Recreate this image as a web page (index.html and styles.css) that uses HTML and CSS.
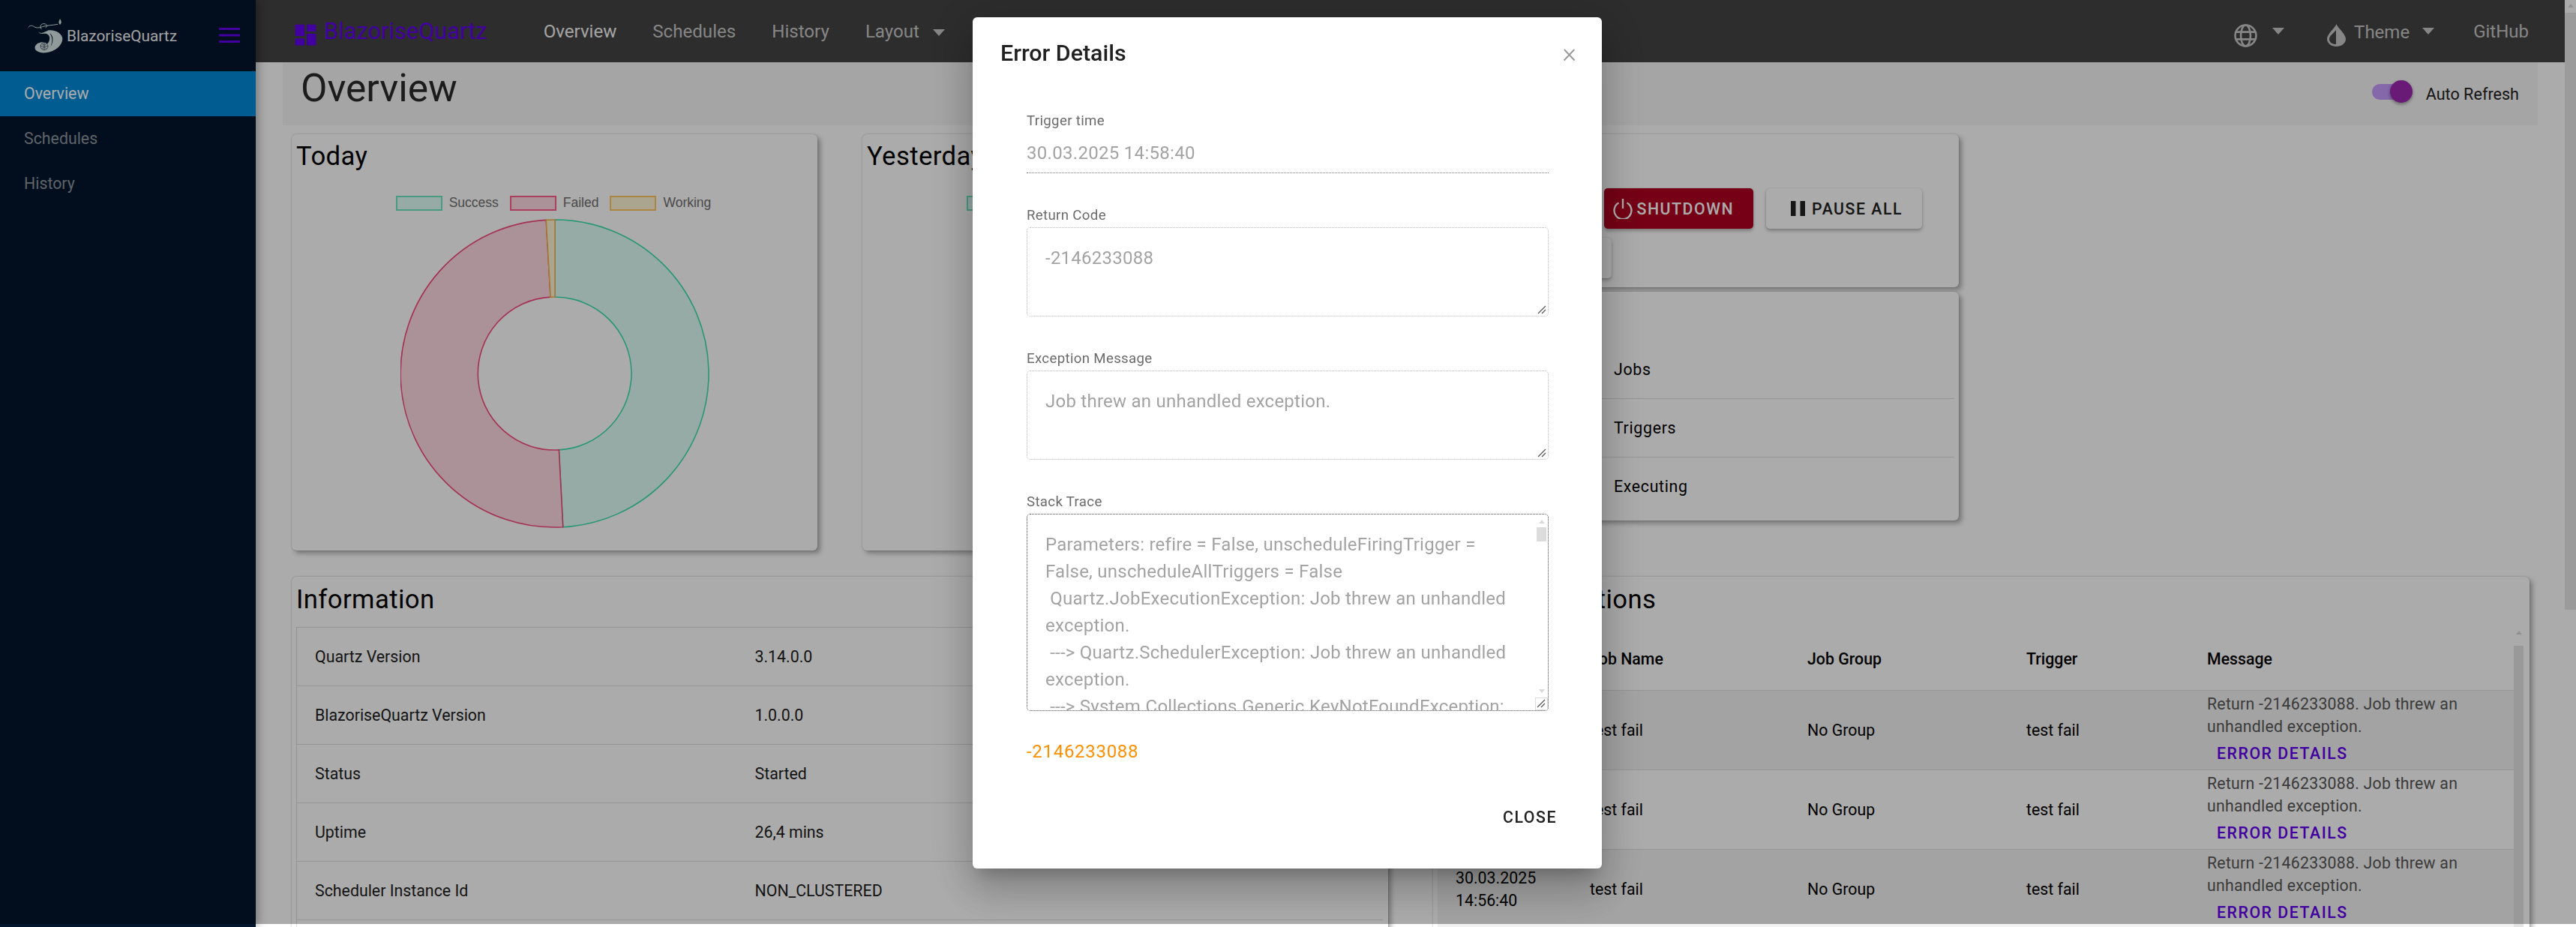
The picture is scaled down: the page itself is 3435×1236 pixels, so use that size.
FILE: index.html
```html
<!DOCTYPE html>
<html lang="en">
<head>
    <meta charset="UTF-8">
    <meta name="viewport" content="width=device-width, initial-scale=1.0">
    <title>BlazoriseQuartz</title>
    <link rel="stylesheet" href="styles.css">
</head>
<body>
    <div class="app">
        <aside class="sidebar">
            <div class="side-brand">
                <svg class="side-logo" viewBox="21 18 141 138">
                    <path class="logo-line" d="M24 52C28 44 40 44 46 50C56 56 70 54 80 50C96 44 120 44 142 40"/>
                    <path class="logo-line" d="M76 60C66 50 74 36 88 38C100 40 100 50 92 54"/>
                    <path class="logo-fill" d="M150 18C156 28 158 34 150 42C142 34 146 28 150 18Z"/>
                    <path class="logo-fill" d="M62 70C76 82 90 70 104 64C130 60 162 78 160 100C158 124 134 150 92 154C66 156 46 146 50 130C56 112 84 106 100 118C112 104 112 84 96 78C84 76 70 82 62 70Z"/>
                    <path class="logo-cut" d="M108 76C124 84 126 110 112 130C122 108 120 90 108 76Z"/>
                    <circle class="logo-globe" cx="87" cy="128" r="15"/>
                    <path class="logo-globe" d="M72 128H102M87 113V143M77 118C83 124 91 124 97 118M77 138C83 132 91 132 97 138"/>
                </svg>
                <span class="side-title">BlazoriseQuartz</span>
                <svg class="side-toggle" viewBox="0 0 28 20"><rect width="28" height="3"/><rect y="8.5" width="28" height="3"/><rect y="17" width="28" height="3"/></svg>
            </div>
            <a class="side-item active">Overview</a>
            <a class="side-item">Schedules</a>
            <a class="side-item">History</a>
        </aside>

        <div class="main">
            <nav class="topbar">
                <svg class="brand-icon" viewBox="0 0 24 24"><path d="M3 13h8V3H3v10zm0 8h8v-6H3v6zm10 0h8V11h-8v10zm0-18v6h8V3h-8z"/></svg>
                <span class="brand-text">BlazoriseQuartz</span>
                <a class="nav-link current">Overview</a>
                <a class="nav-link">Schedules</a>
                <a class="nav-link">History</a>
                <a class="nav-link">Layout<i class="caret"></i></a>
                <div class="nav-right">
                    <svg class="globe" viewBox="0 0 24 24">
                        <circle cx="12" cy="12" r="10.8"/>
                        <ellipse cx="12" cy="12" rx="5" ry="10.8"/>
                        <path d="M2 8.2H22M2 15.8H22"/>
                    </svg>
                    <i class="caret globe-caret"></i>
                    <svg class="drop" viewBox="0 0 25 30">
                        <path d="M12.5 0C14 5 25 13 25 20C25 26 19 30 12.5 30C6 30 0 26 0 20C0 13 11 5 12.5 0Z"/>
                        <path class="drop-cut" d="M12 8C8 13 3 16 3 20C3 24.5 7 27 12 27Z"/>
                    </svg>
                    <span class="theme-text">Theme</span>
                    <i class="caret theme-caret"></i>
                    <a class="nav-link github">GitHub</a>
                </div>
            </nav>

            <div class="page-head">
                <h2 class="page-title">Overview</h2>
                <div class="refresh">
                    <span class="switch"><span class="switch-thumb"></span></span>
                    <span>Auto Refresh</span>
                </div>
            </div>

            <div class="cards">
                <section class="card chart-card">
                    <h3 class="card-title">Today</h3>
                    <div class="legend">
                        <span class="legend-box success"></span><span class="legend-label">Success</span>
                        <span class="legend-box failed"></span><span class="legend-label">Failed</span>
                        <span class="legend-box working"></span><span class="legend-label">Working</span>
                    </div>
                    <svg class="donut" viewBox="0 0 412 412">
                        <path class="success" d="M206 1A205 205 0 0 1 216.73 410.72L211.34 307.86A102 102 0 0 0 206 104Z"/>
                        <path class="failed" d="M216.73 410.72A205 205 0 1 1 194.2 1.34L200.13 104.17A102 102 0 1 0 211.34 307.86Z"/>
                        <path class="working" d="M194.2 1.34A205 205 0 0 1 206 1L206 104A102 102 0 0 0 200.13 104.17Z"/>
                    </svg>
                </section>

                <section class="card chart-card">
                    <h3 class="card-title">Yesterday</h3>
                    <div class="legend">
                        <span class="legend-box success"></span><span class="legend-label">Success</span>
                        <span class="legend-box failed"></span><span class="legend-label">Failed</span>
                        <span class="legend-box working"></span><span class="legend-label">Working</span>
                    </div>
                </section>

                <div class="side-stack">
                    <section class="card actions-card">
                        <div class="action-row">
                            <button class="btn">Standby</button>
                            <button class="btn danger">
                                <svg class="power" viewBox="0 0 28 28"><path d="M8.5 6.5A11.5 11.5 0 1 0 19.5 6.5M14 1V14"/></svg>
                                Shutdown
                            </button>
                            <button class="btn pause">
                                <svg class="pause-icon" viewBox="0 0 19 20"><rect width="6.5" height="20"/><rect x="12.5" width="6.5" height="20"/></svg>
                                Pause All
                            </button>
                        </div>
                        <div class="action-row second">
                            <button class="btn wide">Resume All</button>
                        </div>
                    </section>
                    <section class="card counts-card">
                        <div class="count-row">Jobs</div>
                        <div class="count-row">Triggers</div>
                        <div class="count-row">Executing</div>
                    </section>
                </div>

                <section class="card wide-card">
                    <h3 class="card-title">Information</h3>
                    <table class="info-table">
                        <tr><td class="info-key">Quartz Version</td><td>3.14.0.0</td></tr>
                        <tr><td class="info-key">BlazoriseQuartz Version</td><td>1.0.0.0</td></tr>
                        <tr><td class="info-key">Status</td><td>Started</td></tr>
                        <tr><td class="info-key">Uptime</td><td>26,4 mins</td></tr>
                        <tr><td class="info-key">Scheduler Instance Id</td><td>NON_CLUSTERED</td></tr>
                        <tr><td class="info-key"></td><td></td></tr>
                    </table>
                </section>

                <section class="card wide-card">
                    <h3 class="card-title">Recent Exceptions</h3>
                    <div class="table-wrap">
                        <table class="exc-table">
                            <colgroup>
                                <col class="col-date"><col class="col-job"><col class="col-group"><col class="col-trigger"><col class="col-msg">
                            </colgroup>
                            <thead>
                                <tr><th>Time</th><th>Job Name</th><th>Job Group</th><th>Trigger</th><th>Message</th></tr>
                            </thead>
                            <tbody>
                                <tr>
                                    <td>30.03.2025 14:58:40</td><td>test fail</td><td>No Group</td><td>test fail</td>
                                    <td class="msg">Return -2146233088. Job threw an unhandled exception.<a class="err-link">Error Details</a></td>
                                </tr>
                                <tr>
                                    <td>30.03.2025 14:57:40</td><td>test fail</td><td>No Group</td><td>test fail</td>
                                    <td class="msg">Return -2146233088. Job threw an unhandled exception.<a class="err-link">Error Details</a></td>
                                </tr>
                                <tr>
                                    <td>30.03.2025 14:56:40</td><td>test fail</td><td>No Group</td><td>test fail</td>
                                    <td class="msg">Return -2146233088. Job threw an unhandled exception.<a class="err-link">Error Details</a></td>
                                </tr>
                            </tbody>
                        </table>
                        <div class="fake-scroll">
                            <i class="arrow-up"></i>
                            <div class="fake-thumb"></div>
                        </div>
                    </div>
                </section>
            </div>
        </div>

        <div class="page-scroll">
            <i class="arrow-up"></i>
            <div class="page-thumb"></div>
        </div>
    </div>

    <div class="backdrop"></div>

    <div class="modal">
        <div class="modal-head">
            <h5 class="modal-title">Error Details</h5>
            <span class="modal-x">&times;</span>
        </div>
        <div class="modal-body">
            <label class="field-label">Trigger time</label>
            <div class="field-input">30.03.2025 14:58:40</div>

            <label class="field-label spaced">Return Code</label>
            <div class="field-area">-2146233088<svg class="grip" viewBox="0 0 12 12"><path d="M11 1L1 11M11 6L6 11"/></svg></div>

            <label class="field-label spaced">Exception Message</label>
            <div class="field-area">Job threw an unhandled exception.<svg class="grip" viewBox="0 0 12 12"><path d="M11 1L1 11M11 6L6 11"/></svg></div>

            <label class="field-label spaced">Stack Trace</label>
            <div class="field-area stack">
                <div class="stack-text">Parameters: refire = False, unscheduleFiringTrigger = False, unscheduleAllTriggers = False
 Quartz.JobExecutionException: Job threw an unhandled exception.
 ---&gt; Quartz.SchedulerException: Job threw an unhandled exception.
 ---&gt; System.Collections.Generic.KeyNotFoundException: The given key was not present in the dictionary.</div>
                <i class="arrow-up area-up"></i>
                <div class="area-thumb"></div>
                <i class="arrow-down area-down"></i>
                <div class="area-corner"><svg class="grip" viewBox="0 0 12 12"><path d="M11 1L1 11M11 6L6 11"/></svg></div>
            </div>

            <div class="return-code">-2146233088</div>
        </div>
        <div class="modal-foot">
            <button class="close-btn">Close</button>
        </div>
    </div>
</body>
</html>
```

FILE: styles.css
```css
* {
    box-sizing: border-box;
}

html, body {
    margin: 0;
    height: 1236px;
    overflow: hidden;
}

body {
    font-family: Roboto, "Liberation Sans", sans-serif;
    font-size: 21.33px;
    color: #000;
    background: #fff;
}

h2, h3, h5 {
    margin: 0;
    font-weight: 400;
}

.app {
    display: flex;
    height: 1236px;
}

/* sidebar */
.sidebar {
    position: relative;
    z-index: 1;
    flex: 0 0 341px;
    background: #03162d;
    box-shadow: 0 0 14px rgba(0, 0, 0, 0.45);
}
.side-brand {
    display: flex;
    align-items: center;
    height: 95px;
    padding-left: 37px;
}
.side-logo {
    width: 47px;
    height: 46px;
    margin-right: 5px;
}
.logo-line {
    fill: none;
    stroke: #d8e6e6;
    stroke-width: 3;
}
.logo-fill {
    fill: #d8e6e6;
}
.logo-cut {
    fill: #03162d;
}
.logo-globe {
    fill: none;
    stroke: #25384a;
    stroke-width: 2;
}
.side-title {
    color: #fff;
    opacity: 0.95;
    font-size: 20.8px;
}
.side-toggle {
    width: 28px;
    height: 20px;
    margin-left: 56px;
    margin-top: -1px;
    fill: #6200ee;
}
.side-item {
    display: block;
    height: 60px;
    line-height: 60px;
    padding-left: 32px;
    color: #8c959d;
}
.side-item.active {
    background: #0289d9;
    color: #fff;
}

/* top bar */
.main {
    flex: 1;
    min-width: 0;
    overflow: hidden;
}
.topbar {
    display: flex;
    align-items: center;
    height: 83px;
    padding: 0 48px;
    background: #434343;
    font-size: 24.1px;
}
.brand-icon {
    width: 37px;
    height: 37px;
    margin-top: 9px;
    fill: #6200ee;
    flex: none;
}
.brand-text {
    margin-left: 6px;
    margin-right: 75px;
    font-size: 30.8px;
    color: #6200ee;
}
.nav-link {
    margin-right: 48px;
    color: #c8c8c8;
}
.nav-link.current {
    color: #f5f5f5;
}
.caret {
    display: inline-block;
    width: 0;
    height: 0;
    margin-left: 18px;
    vertical-align: middle;
    border-left: 8px solid transparent;
    border-right: 8px solid transparent;
    border-top: 9px solid #c8c8c8;
}
.nav-right {
    display: flex;
    align-items: center;
    margin-left: auto;
    font-size: 24px;
}
.nav-link.github {
    margin: 0 0 0 52px;
}
.globe {
    width: 31px;
    height: 31px;
    margin-top: 11px;
    fill: none;
    stroke: #c8c8c8;
    stroke-width: 2;
}
.globe-caret {
    margin-left: 20px;
    flex: none;
}
.drop {
    width: 25px;
    height: 30px;
    margin: 11px 11px 0 57px;
    fill: #c8c8c8;
}
.drop-cut {
    fill: #434343;
}
.theme-text {
    margin-top: 3px;
    color: #c8c8c8;
}
.theme-caret {
    margin-left: 17px;
    flex: none;
}

/* page heading */
.page-head {
    display: flex;
    justify-content: space-between;
    height: 84px;
    margin: 0 36px;
    padding: 4px 25px 0 24px;
    background: #f6f6f6;
}
.page-title {
    font-size: 51.5px;
    line-height: 61px;
    color: #2a2a2a;
}
.refresh {
    display: flex;
    align-items: center;
    margin-top: -4px;
    color: #222;
    font-size: 21.6px;
}
.switch {
    position: relative;
    width: 54px;
    height: 21px;
    margin-right: 18px;
    margin-bottom: 5px;
    border-radius: 11px;
    background: #c59bfc;
}
.switch-thumb {
    position: absolute;
    top: -5px;
    right: 0;
    width: 30px;
    height: 30px;
    border-radius: 50%;
    background: #9c27b0;
    box-shadow: 0 2px 4px rgba(0, 0, 0, 0.4);
}

/* cards */
.cards {
    display: grid;
    grid-template-columns: repeat(4, 701px);
    column-gap: 60px;
    row-gap: 35px;
    margin-top: 12px;
    padding-left: 48px;
}
.card {
    background: #fff;
    border-radius: 6px;
    box-shadow: 4px 4px 6px rgba(0, 0, 0, 0.3), 0 0 2px rgba(0, 0, 0, 0.25);
}
.card-title {
    padding: 9px 0 0 6px;
    font-size: 34.67px;
    line-height: 41px;
    letter-spacing: 0.4px;
}
.chart-card {
    height: 555px;
}
.legend {
    display: flex;
    justify-content: center;
    align-items: center;
    margin-top: 31px;
    padding-right: 3px;
    font-family: "Liberation Sans", Arial, sans-serif;
    font-size: 17.5px;
    color: #6f6f6f;
}
.legend-box {
    width: 62px;
    height: 20px;
    margin-right: 9px;
    border: 2.5px solid;
}
.legend-label {
    margin-right: 15px;
}
.legend-label:last-child {
    margin-right: 0;
}
.legend-box.success { background: #e0fff6; border-color: #6fe6c0; }
.legend-box.failed { background: #ffdae3; border-color: #ff5e8c; }
.legend-box.working { background: #fff6d5; border-color: #ffc762; }

.donut {
    display: block;
    width: 412px;
    height: 412px;
    margin: 11px auto 0;
    stroke-width: 1.6;
}
.donut .success { fill: #e0fff6; stroke: #3be0ac; }
.donut .failed { fill: #ffdae3; stroke: #f5487c; }
.donut .working { fill: #fff6d5; stroke: #f5b54a; }

.side-stack {
    display: flex;
    flex-direction: column;
    gap: 6px;
}
.actions-card {
    padding: 72px 49px 12px 34px;
}
.action-row {
    display: flex;
    justify-content: flex-end;
    gap: 17px;
}
.action-row.second {
    justify-content: flex-start;
    margin-top: 12px;
}
.btn {
    display: flex;
    align-items: center;
    justify-content: center;
    height: 54px;
    padding: 0 26px;
    border: 0;
    border-radius: 5px;
    background: #fff;
    color: #212121;
    font-family: Roboto, sans-serif;
    font-size: 21.33px;
    font-weight: 500;
    letter-spacing: 1.5px;
    text-transform: uppercase;
    box-shadow: 0 3px 4px rgba(0, 0, 0, 0.25), 0 0 2px rgba(0, 0, 0, 0.15);
    white-space: nowrap;
}
.btn.danger {
    padding-left: 11px;
    background: #b00020;
    color: #fff;
}
.btn.wide {
    width: 204px;
    padding: 0;
}
.power {
    width: 28px;
    height: 28px;
    margin-right: 5px;
    fill: none;
    stroke: #fff;
    stroke-width: 2.4;
}
.pause {
    padding-left: 33px;
}
.pause-icon {
    width: 19px;
    height: 20px;
    margin-right: 9px;
    fill: #212121;
}
.counts-card {
    padding: 65px 6px 6px;
    letter-spacing: 0.67px;
}
.count-row {
    height: 78px;
    line-height: 78px;
    padding-left: 235px;
    border-bottom: 1px solid #dedede;
}
.count-row:last-child {
    border-bottom: 0;
}

/* tables */
.wide-card {
    grid-column: span 2;
    height: 520px;
}
.wide-card .card-title {
    padding-top: 10px;
    height: 67px;
}
.info-table {
    width: calc(100% - 13px);
    margin-left: 6px;
    border-collapse: collapse;
    border-left: 1px solid #dedede;
    border-top: 1px solid #dedede;
}
.info-table td {
    height: 78px;
    padding: 0 24px;
    border-bottom: 1px solid #dedede;
    color: #1d1d1d;
}
.info-key {
    width: 587px;
}
.table-wrap {
    position: relative;
    margin-left: 6px;
    width: 1448px;
}
.exc-table {
    width: 1435px;
    table-layout: fixed;
    border-collapse: collapse;
}
.col-date { width: 179px; }
.col-job { width: 290px; }
.col-group { width: 292px; }
.col-trigger { width: 241px; }
.col-msg { width: 433px; }

.exc-table th {
    height: 84px;
    padding: 2px 24px 0;
    text-align: left;
    font-weight: 500;
    border-bottom: 1px solid #dedede;
}
.exc-table td {
    height: 106px;
    padding: 1px 24px 0;
    border-bottom: 1px solid #dedede;
    line-height: 30px;
}
.exc-table tbody tr:nth-child(odd) {
    background: #f3f3f3;
}
.exc-table td.msg {
    padding: 3px 70px 0 24px;
    vertical-align: top;
    letter-spacing: 0.22px;
    color: #585858;
}
.err-link {
    display: block;
    margin: 6px 0 0 13px;
    color: #6200ee;
    font-weight: 500;
    letter-spacing: 1.5px;
    text-transform: uppercase;
}
.fake-scroll {
    position: absolute;
    top: 0;
    right: 0;
    bottom: 0;
    width: 13px;
}
.fake-thumb {
    height: 100%;
    margin-top: 15px;
    background: #e4e4e4;
}

/* scrollbars drawn by hand */
.arrow-up, .arrow-down {
    display: block;
    width: 0;
    height: 0;
    margin: 5px auto 0;
    border-left: 4px solid transparent;
    border-right: 4px solid transparent;
}
.arrow-up {
    border-bottom: 5px solid #d9d9d9;
}
.arrow-down {
    border-top: 5px solid #d9d9d9;
}
.page-scroll {
    flex: 0 0 15px;
}
.page-thumb {
    height: 796px;
    margin-top: 7px;
    background: #e7e7e7;
}

/* modal */
.backdrop {
    position: fixed;
    top: 0;
    left: 0;
    right: 0;
    height: 1232px;
    background: rgba(0, 0, 0, 0.33);
    z-index: 10;
}
.modal {
    position: fixed;
    top: 23px;
    left: 1297px;
    z-index: 11;
    width: 839px;
    height: 1135px;
    border-radius: 6px;
    background: #fff;
    box-shadow: 0 15px 20px -9px rgba(0, 0, 0, 0.2), 0 32px 50px 4px rgba(0, 0, 0, 0.14), 0 12px 61px 11px rgba(0, 0, 0, 0.12);
}
.modal-head {
    display: flex;
    justify-content: space-between;
    align-items: center;
    padding: 26px 34px 0 37px;
}
.modal-title {
    font-size: 30.4px;
    line-height: 39px;
    font-weight: 500;
    color: #212121;
}
.modal-x {
    font-size: 36px;
    line-height: 39px;
    font-weight: 300;
    color: #9a9a9a;
    margin-top: 3px;
}
.modal-body {
    padding: 58px 71px 0 72px;
}
.field-label {
    display: block;
    height: 24px;
    line-height: 24px;
    font-size: 18.67px;
    letter-spacing: 0.33px;
    color: #6b6b6b;
}
.field-label.spaced {
    margin-top: 44px;
}
.field-input {
    height: 58px;
    padding-top: 13px;
    line-height: 36px;
    font-size: 24px;
    letter-spacing: 0.3px;
    color: #a3a3a3;
    border-bottom: 1px dotted #777;
}
.field-area {
    position: relative;
    height: 119px;
    margin-top: 4px;
    padding: 22px 24px;
    border: 1px dotted #bbb;
    border-radius: 5px;
    line-height: 36px;
    font-size: 24px;
    letter-spacing: 0.25px;
    color: #a3a3a3;
    overflow: hidden;
}
.grip {
    position: absolute;
    right: 2px;
    bottom: 2px;
    width: 12px;
    height: 12px;
    fill: none;
    stroke: #555;
    stroke-width: 1.2;
}
.field-area.stack {
    height: 263px;
    padding: 22px 44px 0 24px;
    border-color: #444;
}
.stack-text {
    white-space: pre-wrap;
}
.area-up, .area-down {
    position: absolute;
    right: 4px;
    margin: 0;
}
.area-up {
    top: 7px;
}
.area-down {
    top: 233px;
}
.area-thumb {
    position: absolute;
    top: 17px;
    right: 2px;
    width: 13px;
    height: 19px;
    background: #dcdcdc;
}
.area-corner {
    position: absolute;
    right: 0;
    bottom: 0;
    width: 17px;
    height: 17px;
    background: #fff;
    border: 1px solid #ddd;
}
.return-code {
    margin-top: 36px;
    line-height: 36px;
    font-size: 24px;
    letter-spacing: 0.7px;
    color: #ff8f00;
}
.modal-foot {
    display: flex;
    justify-content: flex-end;
    margin-top: 45px;
    padding-right: 44px;
}
.close-btn {
    height: 48px;
    padding: 0 16px;
    border: 0;
    background: none;
    font-family: Roboto, sans-serif;
    font-size: 21.33px;
    font-weight: 500;
    letter-spacing: 1.5px;
    text-transform: uppercase;
    color: #212121;
}
```
